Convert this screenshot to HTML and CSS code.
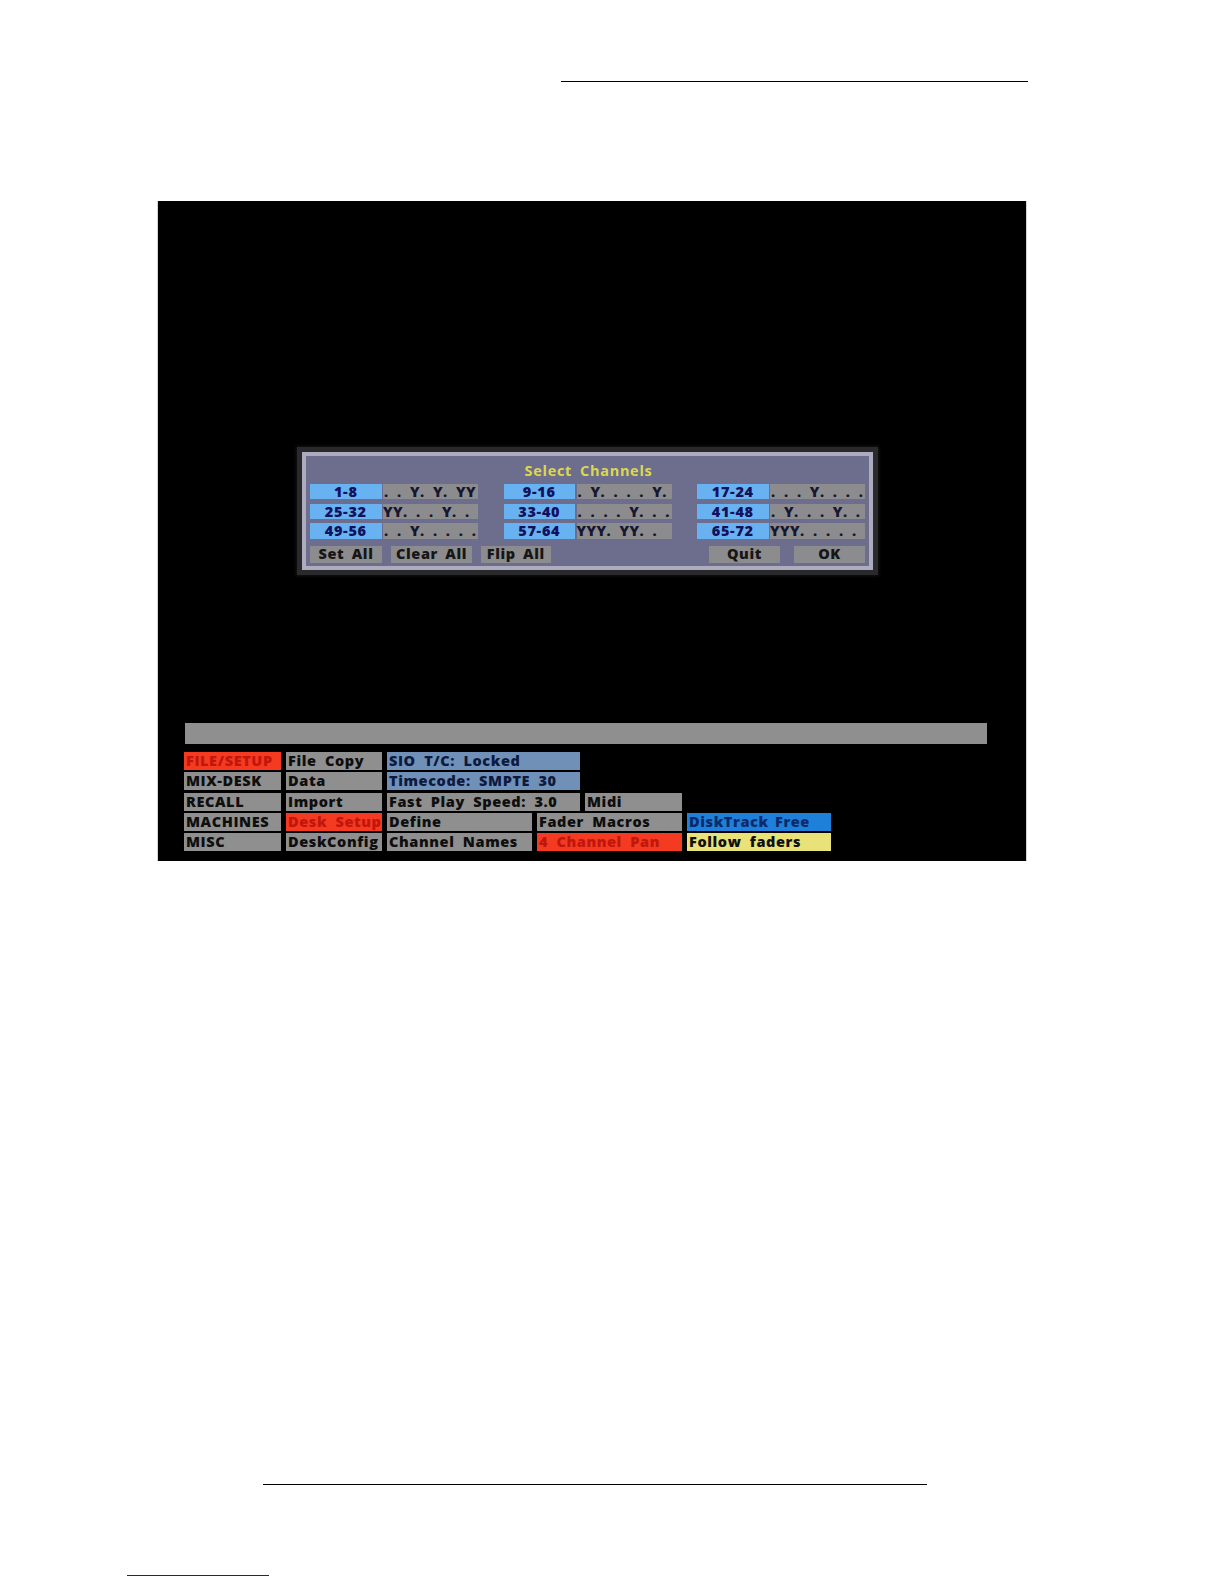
FILE: index.html
```html
<!DOCTYPE html>
<html lang="en">
<head>
<meta charset="utf-8">
<title>Select Channels</title>
<link rel="stylesheet" href="styles.css">
</head>
<body>
<div class="page">
  <div class="top-rule"></div>

  <div class="screen">
    <div class="dialog">
      <div class="dialog-body">
        <div class="dlg-title">Select Channels</div>
        <div class="ch-grid">
          <div class="ch"><span class="ch-label">1-8</span><span class="ch-value">. . Y. Y. YY</span></div>
          <div class="ch"><span class="ch-label">9-16</span><span class="ch-value">. Y. . . . Y.</span></div>
          <div class="ch"><span class="ch-label">17-24</span><span class="ch-value">. . . Y. . . .</span></div>
          <div class="ch"><span class="ch-label">25-32</span><span class="ch-value tight">YY. . . Y. .</span></div>
          <div class="ch"><span class="ch-label">33-40</span><span class="ch-value">. . . . Y. . .</span></div>
          <div class="ch"><span class="ch-label">41-48</span><span class="ch-value">. Y. . . Y. .</span></div>
          <div class="ch"><span class="ch-label">49-56</span><span class="ch-value">. . Y. . . . .</span></div>
          <div class="ch"><span class="ch-label">57-64</span><span class="ch-value tight">YYY. YY. .</span></div>
          <div class="ch"><span class="ch-label">65-72</span><span class="ch-value tight">YYY. . . . .</span></div>
        </div>
        <div class="btn-row">
          <span class="btn btn-set">Set All</span>
          <span class="btn btn-clear">Clear All</span>
          <span class="btn btn-flip">Flip All</span>
          <span class="btn btn-quit">Quit</span>
          <span class="btn btn-ok">OK</span>
        </div>
      </div>
    </div>

    <div class="status-bar"></div>

    <div class="menu">
      <div class="cell red first">FILE/SETUP</div>
      <div class="cell">File Copy</div>
      <div class="cell steel span2">SIO T/C: Locked</div>

      <div class="cell first">MIX-DESK</div>
      <div class="cell">Data</div>
      <div class="cell steel span2">Timecode: SMPTE 30</div>

      <div class="cell first">RECALL</div>
      <div class="cell">Import</div>
      <div class="cell span2">Fast Play Speed: 3.0</div>
      <div class="cell">Midi</div>

      <div class="cell first">MACHINES</div>
      <div class="cell red">Desk Setup</div>
      <div class="cell">Define</div>
      <div class="cell span2">Fader Macros</div>
      <div class="cell blue">DiskTrack Free</div>

      <div class="cell first">MISC</div>
      <div class="cell">DeskConfig</div>
      <div class="cell">Channel Names</div>
      <div class="cell red span2">4 Channel Pan</div>
      <div class="cell yellow">Follow faders</div>
    </div>
  </div>

  <div class="bottom-rule"></div>
  <div class="link-rule"></div>
</div>
</body>
</html>
```

FILE: styles.css
```css
html, body {
  margin: 0;
  padding: 0;
  background: #ffffff;
}

body {
  font-family: "Open Sans", "DejaVu Sans", sans-serif;
}

.page {
  width: 1224px;
  height: 1584px;
  overflow: hidden;
  display: flow-root;
}

.top-rule {
  margin: 81px 0 0 561px;
  width: 467px;
  height: 1.4px;
  background: #000;
}

.screen {
  margin: 118.6px 0 0 158px;
  width: 868px;
  height: 660.5px;
  background: #000;
  box-shadow: -1px 0 0 #d4d4d4, 1px 0 0 #d4d4d4;
  display: flow-root;
}

/* ---------- dialog ---------- */
.dialog {
  margin: 246px 0 0 139px;
  width: 581px;
  height: 128px;
  box-sizing: border-box;
  padding: 5px;
  background: #2a2a2c;
  box-shadow: 0 0 3px 1px #161616;
}

.dialog-body {
  height: 100%;
  box-sizing: border-box;
  border: 4px solid #acacbe;
  background: #6d6d8d;
  padding: 0 4px 2px;
}

.dlg-title {
  height: 28px;
  line-height: 29px;
  text-align: center;
  color: #dcd84e;
  font-weight: 700;
  font-size: 14.5px;
  letter-spacing: 0.7px;
  word-spacing: 3.5px;
  padding-left: 2px;
}

.ch-grid {
  display: grid;
  grid-template-columns: repeat(3, 168px);
  column-gap: 25.5px;
  row-gap: 4.3px;
}

.ch {
  display: flex;
  gap: 1.5px;
  height: 15.4px;
}

.ch-label,
.ch-value,
.btn {
  font-weight: 800;
  font-size: 14.5px;
  white-space: pre;
}

.ch-label {
  width: 71.5px;
  flex: none;
  background: #68b2f2;
  color: #12125c;
  text-align: center;
  line-height: 15.4px;
  letter-spacing: 0.7px;
}

.ch-value {
  flex: 1;
  background: #8c8c8e;
  color: #161630;
  line-height: 15.4px;
  letter-spacing: 0.4px;
  word-spacing: 4.2px;
  padding-left: 1px;
}

.ch-value.tight {
  padding-left: 0;
}

.btn-row {
  display: flex;
  margin-top: 7.3px;
  height: 16.7px;
}

.btn {
  background: #8c8c8e;
  color: #161616;
  text-align: center;
  line-height: 16.7px;
  letter-spacing: 0.6px;
  word-spacing: 3px;
}

.btn-set { width: 72px; }
.btn-clear { width: 81px; margin-left: 9px; }
.btn-flip { width: 69.5px; margin-left: 9px; }
.btn-quit { width: 71px; margin-left: auto; }
.btn-ok { width: 71px; margin-left: 14px; }

/* ---------- bottom console ---------- */
.status-bar {
  margin: 148.3px 0 0 27px;
  width: 802px;
  height: 21px;
  background: #8f8f8f;
}

.menu {
  margin: 7.7px 0 0 26px;
  display: grid;
  grid-template-columns: 97px 96px 145px 43px 97px 144px;
  grid-auto-rows: 18px;
  column-gap: 5px;
  row-gap: 2.33px;
}

.cell {
  background: #8f8f8f;
  color: #0e0e0e;
  font-size: 14.5px;
  font-weight: 800;
  line-height: 18px;
  padding-left: 2px;
  letter-spacing: 0.6px;
  word-spacing: 4px;
  white-space: nowrap;
}

.cell.first { grid-column-start: 1; }
.cell.span2 { grid-column-end: span 2; }

.cell.red {
  background: #f43a20;
  color: #c0160c;
}

.cell.steel {
  background: #7190b8;
  color: #0c1a40;
}

.cell.blue {
  background: #1e80d8;
  color: #0a2a6c;
  word-spacing: 2px;
}

.cell.yellow {
  background: #e8e278;
  color: #101010;
}

/* ---------- page rules ---------- */
.bottom-rule {
  margin: 622.5px 0 0 263px;
  width: 664px;
  height: 1.4px;
  background: #000;
}

.link-rule {
  margin: 89.6px 0 0 127px;
  width: 142px;
  height: 1.5px;
  background: #1c1c8c;
}
```
